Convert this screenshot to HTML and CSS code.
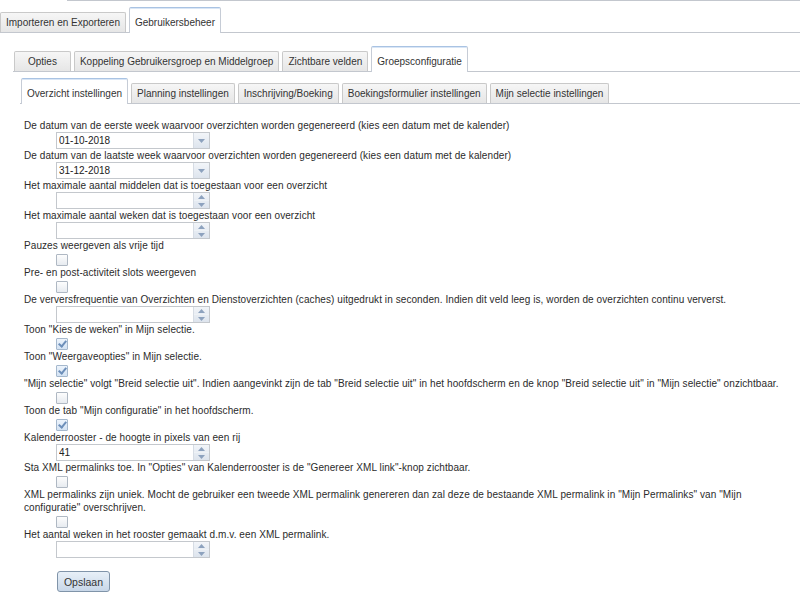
FILE: index.html
```html
<!DOCTYPE html>
<html lang="nl">
<head>
    <meta charset="UTF-8">
    <meta name="viewport" content="width=device-width, initial-scale=1.0">
    <title>Groepsconfiguratie</title>
    <link rel="stylesheet" href="styles.css">
</head>
<body>
    <div class="topline"></div>
    <ul class="tabnav">
        <li class="tab">Importeren en Exporteren</li>
        <li class="tab active">Gebruikersbeheer</li>
    </ul>
    <div class="panel panel-1">
        <ul class="tabnav nav-2">
            <li class="tab tab-wide">Opties</li>
            <li class="tab">Koppeling Gebruikersgroep en Middelgroep</li>
            <li class="tab">Zichtbare velden</li>
            <li class="tab active">Groepsconfiguratie</li>
        </ul>
        <div class="panel panel-2">
            <ul class="tabnav nav-3">
                <li class="tab active">Overzicht instellingen</li>
                <li class="tab">Planning instellingen</li>
                <li class="tab">Inschrijving/Boeking</li>
                <li class="tab">Boekingsformulier instellingen</li>
                <li class="tab">Mijn selectie instellingen</li>
            </ul>
            <form class="settings">
                <label for="f1">De datum van de eerste week waarvoor overzichten worden gegenereerd (kies een datum met de kalender)</label>
                <div class="field">
                    <input type="text" id="f1" value="01-10-2018">
                    <span class="drop"><svg width="7" height="4" viewBox="0 0 7 4"><path d="M0 0h7L3.5 4z" fill="#8da2be"/></svg></span>
                </div>
                <label for="f2">De datum van de laatste week waarvoor overzichten worden gegenereerd (kies een datum met de kalender)</label>
                <div class="field">
                    <input type="text" id="f2" value="31-12-2018">
                    <span class="drop"><svg width="7" height="4" viewBox="0 0 7 4"><path d="M0 0h7L3.5 4z" fill="#8da2be"/></svg></span>
                </div>
                <label for="f3">Het maximale aantal middelen dat is toegestaan voor een overzicht</label>
                <div class="field">
                    <input type="text" id="f3" value="">
                    <span class="spin">
                        <span class="half"><svg width="7" height="4" viewBox="0 0 7 4"><path d="M0 4h7L3.5 0z" fill="#8da2be"/></svg></span>
                        <span class="half"><svg width="7" height="4" viewBox="0 0 7 4"><path d="M0 0h7L3.5 4z" fill="#8da2be"/></svg></span>
                    </span>
                </div>
                <label for="f4">Het maximale aantal weken dat is toegestaan voor een overzicht</label>
                <div class="field">
                    <input type="text" id="f4" value="">
                    <span class="spin">
                        <span class="half"><svg width="7" height="4" viewBox="0 0 7 4"><path d="M0 4h7L3.5 0z" fill="#8da2be"/></svg></span>
                        <span class="half"><svg width="7" height="4" viewBox="0 0 7 4"><path d="M0 0h7L3.5 4z" fill="#8da2be"/></svg></span>
                    </span>
                </div>
                <label for="f5">Pauzes weergeven als vrije tijd</label>
                <input type="checkbox" class="check" id="f5">
                <label for="f6">Pre- en post-activiteit slots weergeven</label>
                <input type="checkbox" class="check" id="f6">
                <label for="f7">De verversfrequentie van Overzichten en Dienstoverzichten (caches) uitgedrukt in seconden. Indien dit veld leeg is, worden de overzichten continu ververst.</label>
                <div class="field">
                    <input type="text" id="f7" value="">
                    <span class="spin">
                        <span class="half"><svg width="7" height="4" viewBox="0 0 7 4"><path d="M0 4h7L3.5 0z" fill="#8da2be"/></svg></span>
                        <span class="half"><svg width="7" height="4" viewBox="0 0 7 4"><path d="M0 0h7L3.5 4z" fill="#8da2be"/></svg></span>
                    </span>
                </div>
                <label for="f8">Toon "Kies de weken" in Mijn selectie.</label>
                <input type="checkbox" class="check" id="f8" checked>
                <label for="f9">Toon "Weergaveopties" in Mijn selectie.</label>
                <input type="checkbox" class="check" id="f9" checked>
                <label for="f10">"Mijn selectie" volgt "Breid selectie uit". Indien aangevinkt zijn de tab "Breid selectie uit" in het hoofdscherm en de knop "Breid selectie uit" in "Mijn selectie" onzichtbaar.</label>
                <input type="checkbox" class="check" id="f10">
                <label for="f11">Toon de tab "Mijn configuratie" in het hoofdscherm.</label>
                <input type="checkbox" class="check" id="f11" checked>
                <label for="f12">Kalenderrooster - de hoogte in pixels van een rij</label>
                <div class="field">
                    <input type="text" id="f12" value="41">
                    <span class="spin">
                        <span class="half"><svg width="7" height="4" viewBox="0 0 7 4"><path d="M0 4h7L3.5 0z" fill="#8da2be"/></svg></span>
                        <span class="half"><svg width="7" height="4" viewBox="0 0 7 4"><path d="M0 0h7L3.5 4z" fill="#8da2be"/></svg></span>
                    </span>
                </div>
                <label for="f13">Sta XML permalinks toe. In "Opties" van Kalenderrooster is de "Genereer XML link"-knop zichtbaar.</label>
                <input type="checkbox" class="check" id="f13">
                <label for="f14">XML permalinks zijn uniek. Mocht de gebruiker een tweede XML permalink genereren dan zal deze de bestaande XML permalink in "Mijn Permalinks" van "Mijn configuratie" overschrijven.</label>
                <input type="checkbox" class="check" id="f14">
                <label for="f15">Het aantal weken in het rooster gemaakt d.m.v. een XML permalink.</label>
                <div class="field">
                    <input type="text" id="f15" value="">
                    <span class="spin">
                        <span class="half"><svg width="7" height="4" viewBox="0 0 7 4"><path d="M0 4h7L3.5 0z" fill="#8da2be"/></svg></span>
                        <span class="half"><svg width="7" height="4" viewBox="0 0 7 4"><path d="M0 0h7L3.5 4z" fill="#8da2be"/></svg></span>
                    </span>
                </div>
                <button type="submit" class="save">Opslaan</button>
            </form>
        </div>
    </div>
</body>
</html>
```

FILE: styles.css
```css
body {
    margin: 0;
    font-family: "Liberation Sans", Arial, sans-serif;
    font-size: 10px;
    color: #2b2b2b;
    background-color: #fff;
}
.topline {
    margin-left: 67px;
    border-top: 1px solid #c3c7ce;
}

/* tabs */
.tabnav {
    display: flex;
    align-items: flex-end;
    gap: 3px;
    margin: 0;
    padding: 6px 0 0;
    list-style: none;
    border-bottom: 1px solid #c3c7ce;
}
.tab {
    padding: 4px 5px 3px;
    line-height: 12px;
    color: #333;
    white-space: nowrap;
    border: 1px solid #c9c9c9;
    border-bottom: 0;
    border-radius: 2px 2px 0 0;
    background: linear-gradient(#f6f6f6, #e6e6e6);
}
.tab.active {
    padding-top: 9px;
    padding-bottom: 4px;
    margin-bottom: -1px;
    background: #fff;
    border-color: #c6ccd6;
    border-top-color: #a9c3e3;
    box-shadow: inset 0 1px 0 #d9e6f6;
}
.tab-wide {
    padding-left: 13px;
    padding-right: 13px;
}
.panel-1 {
    padding: 13px 0 0 13px;
}
.nav-2 {
    padding: 0 0 0 1px;
}
.panel-2 {
    padding: 6px 0 0 7px;
}
.nav-3 {
    padding: 0 0 0 1px;
}

/* form */
.settings {
    padding: 15px 0 0 4px;
}
.settings label {
    display: block;
    line-height: 13px;
    letter-spacing: 0.08px;
}
.field {
    display: flex;
    width: 154px;
    height: 17px;
    box-sizing: border-box;
    margin: 0 0 0 32px;
    border: 1px solid #c4c8cd;
    background: #fff;
}
.field input {
    flex: 1;
    min-width: 0;
    height: 15px;
    padding: 0 0 0 2px;
    border: 0;
    outline: none;
    font: inherit;
    color: #222;
    background: transparent;
}
.drop, .spin {
    width: 15px;
    display: flex;
    border-left: 1px solid #d6dce4;
    background: linear-gradient(#f2f5f9, #dde4ed);
}
.drop {
    align-items: center;
    justify-content: center;
}
.spin {
    flex-direction: column;
}
.spin .half {
    flex: 1;
    display: flex;
    align-items: center;
    justify-content: center;
}
.spin .half + .half {
    border-top: 1px solid #eef2f6;
}
.check {
    appearance: none;
    display: block;
    position: relative;
    width: 12px;
    height: 12px;
    margin: 2px 0 0 32px;
    border: 1px solid #afb8c3;
    border-radius: 1px;
    background: linear-gradient(#fdfdfd, #e7ebf0);
}
.check:checked {
    border-color: #a5b8cd;
    background: linear-gradient(#edf4fc, #d3e2f3);
}
.check:checked::after {
    content: "";
    position: absolute;
    left: 3px;
    top: 0;
    width: 3px;
    height: 6px;
    border: solid #6d8fba;
    border-width: 0 2px 2px 0;
    transform: rotate(40deg);
}
.save {
    display: block;
    width: 53px;
    height: 21px;
    margin: 13px 0 0 33px;
    padding: 0;
    font: inherit;
    font-size: 10.5px;
    color: #333;
    border: 1px solid #8094a9;
    border-radius: 3px;
    background: linear-gradient(#e8f0f8, #c8d7e8);
    cursor: pointer;
}
```
